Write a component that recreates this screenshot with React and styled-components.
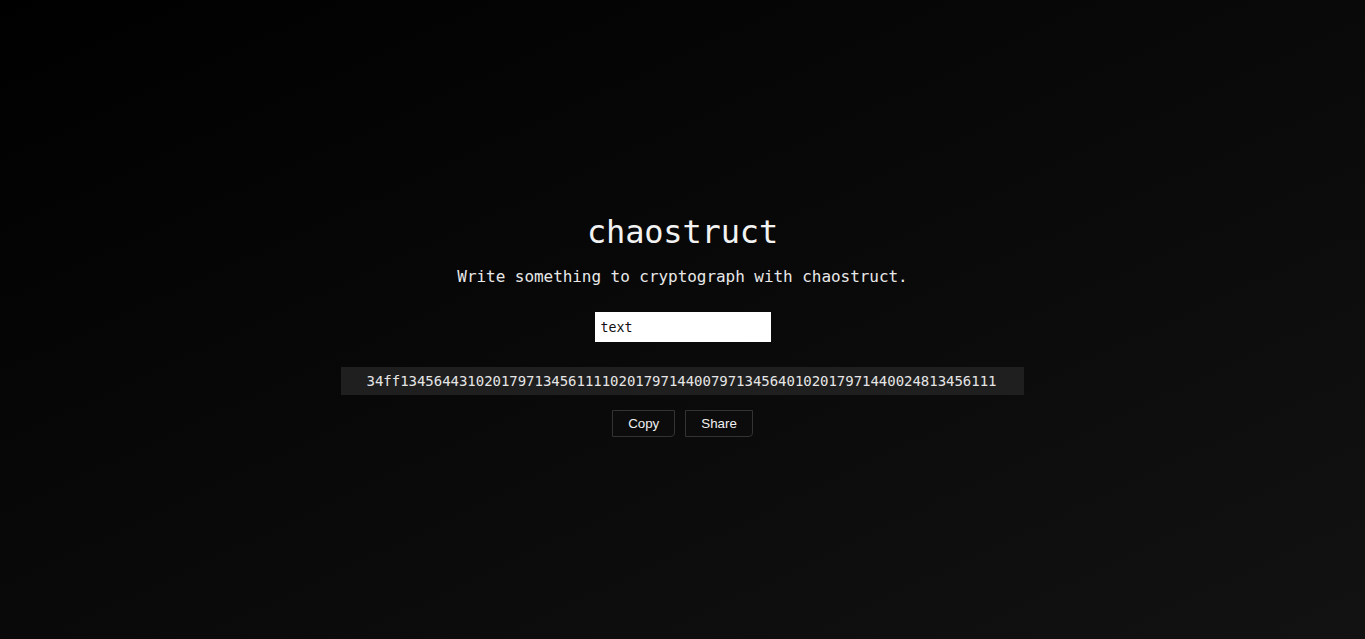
import React, { useState } from "react";
import styled, { createGlobalStyle } from "styled-components";

const Global = createGlobalStyle`
  html, body { margin: 0; padding: 0; }
  body {
    background: linear-gradient(to bottom right, #000000, #121212);
    min-height: 100vh;
    color: #eeeeee;
    font-family: "DejaVu Sans Mono", "Liberation Mono", monospace;
  }
`;

const Main = styled.main`
  min-height: 100vh;
  box-sizing: border-box;
  padding-top: 10px;
  display: flex;
  flex-direction: column;
  align-items: center;
  justify-content: center;
`;

const Title = styled.h1`
  margin: 0;
  font-size: 32px;
  line-height: 40px;
  font-weight: normal;
  color: #f2f2f2;
  letter-spacing: -0.15px;
`;

const Subtitle = styled.p`
  margin: 15px 0 0;
  font-size: 16px;
  line-height: 20px;
  color: #e8e8e8;
  letter-spacing: -0.05px;
`;

const Input = styled.input`
  margin-top: 25px;
  width: 176px;
  height: 30px;
  box-sizing: border-box;
  border: none;
  outline: none;
  background: #ffffff;
  color: #111;
  padding: 0 6px;
  font-family: "DejaVu Sans Mono", "Liberation Mono", monospace;
  font-size: 13.3px;
`;

const Hash = styled.div`
  margin-top: 25px;
  background: #1f1f1f;
  padding: 4px 28px 4px 26px;
  font-size: 14px;
  line-height: 20px;
  color: #e6e6e6;
  letter-spacing: -0.03px;
  white-space: nowrap;
`;

const Actions = styled.div`
  margin-top: 15px;
  display: flex;
  gap: 10px;
`;

const Button = styled.button`
  height: 27px;
  padding: 0 15px;
  box-sizing: border-box;
  background: #0c0c0c;
  color: #f0f0f0;
  border: 1px solid #333333;
  border-radius: 0 0 4px 0;
  font-family: "Liberation Sans", Arial, sans-serif;
  font-size: 13.33px;
  cursor: pointer;
`;

export default function App() {
  const [value, setValue] = useState("text");
  return (
    <>
      <Global />
      <Main>
        <Title>chaostruct</Title>
        <Subtitle>Write something to cryptograph with chaostruct.</Subtitle>
        <Input value={value} onChange={(e) => setValue(e.target.value)} />
        <Hash>34ff13456443102017971345611110201797144007971345640102017971440024813456111</Hash>
        <Actions>
          <Button>Copy</Button>
          <Button>Share</Button>
        </Actions>
      </Main>
    </>
  );
}
